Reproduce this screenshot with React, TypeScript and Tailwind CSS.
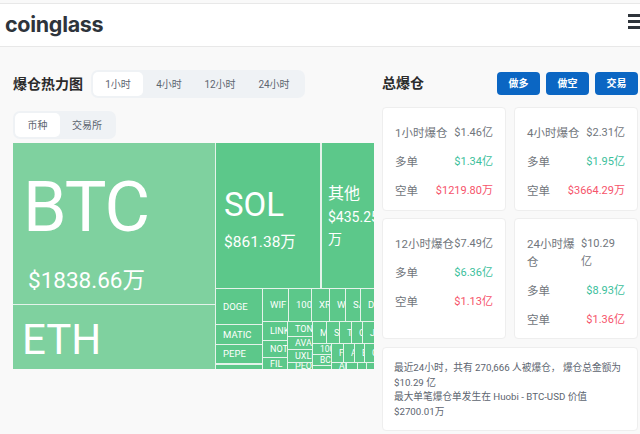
const FONT = 'font-["Roboto","Noto_Sans_CJK_SC",sans-serif]';

type Cell = { x: number; y: number; w: number; h: number; t?: string; size?: number };

const cells: Cell[] = [
  { x: 216, y: 289, w: 46, h: 35, t: "DOGE", size: 9.5 },
  { x: 216, y: 325, w: 46, h: 19, t: "MATIC", size: 9.5 },
  { x: 216, y: 345, w: 46, h: 18, t: "PEPE", size: 9.5 },
  { x: 216, y: 365, w: 46, h: 4 },
  { x: 263, y: 289, w: 25, h: 32, t: "WIF", size: 9.5 },
  { x: 289, y: 289, w: 22, h: 32, t: "1000", size: 9.5 },
  { x: 312, y: 289, w: 17, h: 32, t: "XRP", size: 9.5 },
  { x: 330, y: 289, w: 15, h: 32, t: "W", size: 9.5 },
  { x: 346, y: 289, w: 14, h: 32, t: "SA", size: 9.5 },
  { x: 361, y: 289, w: 14, h: 32, t: "DO", size: 9.5 },
  { x: 263, y: 322, w: 24, h: 18, t: "LINK", size: 9 },
  { x: 263, y: 341, w: 24, h: 16, t: "NOT", size: 9 },
  { x: 263, y: 358, w: 24, h: 11, t: "FIL", size: 9 },
  { x: 288, y: 322, w: 24, h: 14, t: "TON", size: 9 },
  { x: 288, y: 337, w: 24, h: 12, t: "AVAX", size: 9 },
  { x: 288, y: 350, w: 24, h: 12, t: "UXLI", size: 9 },
  { x: 288, y: 363, w: 24, h: 6, t: "PEO", size: 9 },
  { x: 313, y: 322, w: 13, h: 21, t: "M", size: 9 },
  { x: 327, y: 322, w: 12, h: 21, t: "S", size: 9 },
  { x: 340, y: 322, w: 11, h: 21, t: "T", size: 9 },
  { x: 352, y: 322, w: 10, h: 21, t: "O", size: 9 },
  { x: 363, y: 322, w: 12, h: 21, t: "J", size: 9 },
  { x: 313, y: 344, w: 18, h: 10, t: "100", size: 8.5 },
  { x: 313, y: 355, w: 18, h: 10, t: "BC", size: 8.5 },
  { x: 313, y: 366, w: 18, h: 3 },
  { x: 332, y: 344, w: 11, h: 18, t: "F", size: 8.5 },
  { x: 344, y: 344, w: 10, h: 18, t: "A", size: 8.5 },
  { x: 355, y: 344, w: 9, h: 18, t: "E", size: 8.5 },
  { x: 365, y: 344, w: 10, h: 18, t: "G", size: 8.5 },
  { x: 332, y: 363, w: 14, h: 6, t: "AR", size: 8.5 },
  { x: 347, y: 363, w: 10, h: 6 },
  { x: 358, y: 363, w: 8, h: 6 },
  { x: 367, y: 363, w: 8, h: 6 },
];

function Treemap() {
  return (
    <div className="relative mt-[4px] ml-[13px] h-[226px] w-[361px] overflow-hidden bg-[#e4f3ea] text-white">
      <div className="absolute left-0 top-0 h-[161px] w-[202px] bg-[#7fd19f]">
        <div className="absolute left-[10px] top-[19px] text-[70px] leading-[90px] tracking-[-1px]">BTC</div>
        <div className="absolute left-[15px] top-[121px] text-[22.5px] leading-[32px] whitespace-nowrap">$1838.66万</div>
      </div>
      <div className="absolute left-0 top-[162px] h-[64px] w-[202px] bg-[#7fd19f]">
        <div className="absolute left-[9px] top-[8px] text-[42px] leading-[54px]">ETH</div>
      </div>
      <div className="absolute left-[203px] top-0 h-[145px] w-[104px] bg-[#5cc88a]">
        <div className="absolute left-[8px] top-[41px] text-[33px] leading-[42px]">SOL</div>
        <div className="absolute left-[8px] top-[87px] text-[15.5px] leading-[24px] whitespace-nowrap">$861.38万</div>
      </div>
      <div className="absolute left-[309px] top-0 h-[145px] w-[52px] bg-[#5cc88a]">
        <div className="absolute left-[6px] top-[39px] text-[16px] leading-[24px]">其他</div>
        <div className="absolute left-[6px] top-[62px] text-[14px] leading-[24px] whitespace-nowrap">$435.25</div>
        <div className="absolute left-[6px] top-[84px] text-[14px] leading-[24px]">万</div>
      </div>
      {cells.map((c, i) => (
        <div
          key={i}
          className="absolute flex items-center overflow-hidden whitespace-nowrap bg-[#5cc88a] pl-[7px]"
          style={{ left: c.x - 13, top: c.y - 143, width: c.w, height: c.h, fontSize: c.size, lineHeight: "10px" }}
        >
          {c.t}
        </div>
      ))}
    </div>
  );
}

function Row({ label, value, color, wrap }: { label: string; value: string; color?: string; wrap?: boolean }) {
  return (
    <div className={`flex justify-between leading-[18px] ${wrap ? "" : "items-center whitespace-nowrap"}`}>
      <span className={wrap ? "w-[50px]" : "text-[11.5px]"}>{label}</span>
      <span className={`text-[11px] ${color ?? ""} ${wrap ? "w-[44px] text-[11.5px]" : ""}`}>{value}</span>
    </div>
  );
}

function Card({ h, rows, wrapTitle }: { h: string; rows: [string, string][]; wrapTitle?: boolean }) {
  return (
    <div className={`${h} flex w-[124px] flex-col gap-[11px] rounded-[4px] border border-[#eeeeee] bg-white px-[12px] pt-[16px] text-[11.5px] text-[#71767c]`}>
      <Row label={rows[0][0]} value={rows[0][1]} wrap={wrapTitle} />
      <Row label={rows[1][0]} value={rows[1][1]} color="text-[#3cc09c]" />
      <Row label={rows[2][0]} value={rows[2][1]} color="text-[#f6536a]" />
    </div>
  );
}

export default function App() {
  return (
    <div className={`${FONT} h-[434px] w-[640px] overflow-hidden bg-[#f9f9f9]`}>
      <div className="mt-[3px] flex h-[44px] items-center justify-between border-y border-[#e8e8e8] bg-white pl-[5px]">
        <span className='mb-[1px] font-["Inter",sans-serif] text-[21.5px] font-bold tracking-[-0.3px] text-[#2e343b]'>coinglass</span>
        <div className="mb-[8px] flex w-[12px] flex-col gap-[3px]">
          <div className="h-[3px] bg-[#2e343b]" />
          <div className="h-[3px] bg-[#2e343b]" />
          <div className="h-[3px] bg-[#2e343b]" />
        </div>
      </div>
      <div className="flex">
        <div className="w-[382px] shrink-0">
          <div className="mt-[23px] flex items-center gap-[8px] pl-[13px]">
            <span className="text-[14px] font-bold text-[#2b2b2b]">爆仓热力图</span>
            <div className="flex h-[28px] items-center rounded-[7px] bg-[#eff2f5] p-[2px] text-[10px] text-[#5d6570]">
              <span className="flex h-[24px] w-[50px] items-center justify-center rounded-[5px] bg-white">1小时</span>
              <span className="flex w-[52px] justify-center">4小时</span>
              <span className="flex w-[50px] justify-center">12小时</span>
              <span className="flex w-[58px] justify-center">24小时</span>
            </div>
          </div>
          <div className="mt-[13px] ml-[13px] flex h-[28px] w-[103px] items-center rounded-[7px] bg-[#eff2f5] p-[2px] text-[10px] text-[#5d6570]">
            <span className="flex h-[24px] w-[45px] items-center justify-center rounded-[5px] bg-white">币种</span>
            <span className="flex w-[54px] justify-center">交易所</span>
          </div>
          <Treemap />
        </div>
        <div className="w-[258px] shrink-0">
          <div className="mt-[25px] flex items-center justify-between pr-[2px]">
            <span className="text-[14px] font-bold text-[#2b2b2b]">总爆仓</span>
            <div className="flex gap-[6px] text-[10px] font-bold text-white">
              <span className="flex h-[23px] w-[43px] items-center justify-center rounded-[4px] bg-[#0b66c3]">做多</span>
              <span className="flex h-[23px] w-[43px] items-center justify-center rounded-[4px] bg-[#0b66c3]">做空</span>
              <span className="flex h-[23px] w-[43px] items-center justify-center rounded-[4px] bg-[#0b66c3]">交易</span>
            </div>
          </div>
          <div className="mt-[12px] flex gap-[8px]">
            <Card h="h-[104px]" rows={[["1小时爆仓", "$1.46亿"], ["多单", "$1.34亿"], ["空单", "$1219.80万"]]} />
            <Card h="h-[104px]" rows={[["4小时爆仓", "$2.31亿"], ["多单", "$1.95亿"], ["空单", "$3664.29万"]]} />
          </div>
          <div className="mt-[7px] flex gap-[8px]">
            <Card h="h-[121px]" rows={[["12小时爆仓", "$7.49亿"], ["多单", "$6.36亿"], ["空单", "$1.13亿"]]} />
            <Card h="h-[121px]" wrapTitle rows={[["24小时爆仓", "$10.29亿"], ["多单", "$8.93亿"], ["空单", "$1.36亿"]]} />
          </div>
          <div className="mt-[8px] h-[84px] w-[256px] rounded-[4px] border border-[#eeeeee] bg-white pl-[11px] pr-[8px] pt-[13px] text-[9.7px] leading-[14.5px] text-[#5d6570]">
            <div>最近24小时，共有 270,666 人被爆仓， 爆仓总金额为 $10.29 亿</div>
            <div>最大单笔爆仓单发生在 Huobi - BTC-USD 价值 $2700.01万</div>
          </div>
        </div>
      </div>
    </div>
  );
}
